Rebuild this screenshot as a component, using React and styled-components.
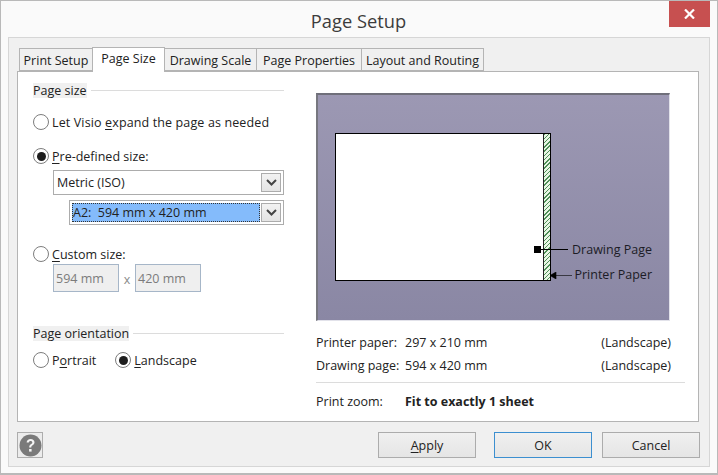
import styled, { createGlobalStyle } from "styled-components";

const GlobalStyle = createGlobalStyle`
  html, body {
    margin: 0;
    padding: 0;
    background: #fafafa;
  }
  * {
    box-sizing: border-box;
  }
`;

const Radio = ({ checked, children }) => (
  <RadioRow>
    <RadioCircle>{checked && <RadioDot />}</RadioCircle>
    <span>{children}</span>
  </RadioRow>
);

const Select = ({ active, children }) => (
  <SelectBox>
    <SelectValue $active={active}>{children}</SelectValue>
    <SelectArrow>
      <svg width="11" height="7" viewBox="0 0 11 7">
        <path d="M1 1l4.5 4.5L10 1" fill="none" stroke="#444" strokeWidth="2" />
      </svg>
    </SelectArrow>
  </SelectBox>
);

const App = () => {
  return (
    <Window>
      <GlobalStyle />
      <TitleBar>
        <Title>Page Setup</Title>
        <CloseButton>
          <svg width="11" height="10" viewBox="0 0 11 10">
            <path d="M1 0.5l9 9M10 0.5l-9 9" stroke="#fff" strokeWidth="2.2" />
          </svg>
        </CloseButton>
      </TitleBar>
      <Body>
        <Tabs>
          <Tab $width={74}>Print Setup</Tab>
          <Tab $width={73} $active>Page Size</Tab>
          <Tab $width={93}>Drawing Scale</Tab>
          <Tab $width={106}>Page Properties</Tab>
          <Tab $width={123}>Layout and Routing</Tab>
        </Tabs>
        <Panel>
          <LeftColumn>
            <GroupTitle>
              <GroupLabel>Page size</GroupLabel>
            </GroupTitle>
            <ExpandRow>
              <Radio>
                Let Visio <u>e</u>xpand the page as needed
              </Radio>
            </ExpandRow>
            <PredefinedRow>
              <Radio checked>
                <u>P</u>re-defined size:
              </Radio>
            </PredefinedRow>
            <SelectIndent $level={1}>
              <Select>Metric (ISO)</Select>
            </SelectIndent>
            <SelectIndent $level={2}>
              <Select active>A2:&nbsp; 594 mm x 420 mm</Select>
            </SelectIndent>
            <CustomRow>
              <Radio>
                <u>C</u>ustom size:
              </Radio>
            </CustomRow>
            <SizeInputs>
              <SizeInput>594 mm</SizeInput>
              <Times>x</Times>
              <SizeInput>420 mm</SizeInput>
            </SizeInputs>
            <OrientationTitle>
              <GroupLabel>Page orientation</GroupLabel>
            </OrientationTitle>
            <OrientationRow>
              <Radio>
                P<u>o</u>rtrait
              </Radio>
              <Radio checked>
                <u>L</u>andscape
              </Radio>
            </OrientationRow>
          </LeftColumn>
          <RightColumn>
            <Preview>
              <Sheet>
                <Hatch />
                <Handle />
              </Sheet>
              <CalloutLine $top={154} $left={223} $width={27} />
              <ArrowHead $top={177} $left={232}>
                <svg width="22" height="7" viewBox="0 0 22 7">
                  <path d="M0 3.500L6 0v7zM5 3.500h17" fill="#000" stroke="#000" strokeWidth="0.6" />
                </svg>
              </ArrowHead>
              <Callout $top={147} $right={17}>Drawing Page</Callout>
              <Callout $top={172} $right={17}>Printer Paper</Callout>
            </Preview>
            <InfoRow $first>
              <InfoLabel>Printer paper:</InfoLabel>
              <InfoValue>297 x 210 mm</InfoValue>
              <span>(Landscape)</span>
            </InfoRow>
            <InfoRow>
              <InfoLabel>Drawing page:</InfoLabel>
              <InfoValue>594 x 420 mm</InfoValue>
              <span>(Landscape)</span>
            </InfoRow>
            <Divider />
            <ZoomRow>
              <InfoLabel>Print zoom:</InfoLabel>
              <ZoomValue>Fit to exactly 1 sheet</ZoomValue>
            </ZoomRow>
          </RightColumn>
        </Panel>
        <Footer>
          <HelpButton>
            <svg width="23" height="23" viewBox="0 0 23 23">
              <circle cx="11.5" cy="11.5" r="11" fill="#7a7a7a" />
              <path
                d="M7.6 8.6c.2-2.3 1.8-3.5 4-3.5 2.300 0 3.900 1.300 3.900 3.200 0 1.500-.8 2.300-1.900 3-1 .7-1.300 1.100-1.300 2.200h-2.100c0-1.700.5-2.500 1.700-3.300.9-.6 1.400-1.100 1.400-1.800 0-.9-.7-1.500-1.700-1.500s-1.700.6-1.800 1.700z"
                fill="#f4f4f4"
              />
              <rect x="10.100" y="15" width="2.500" height="2.600" fill="#f4f4f4" />
            </svg>
          </HelpButton>
          <FooterButtons>
            <Button $apply>
              <u>A</u>pply
            </Button>
            <Button $primary>OK</Button>
            <Button>Cancel</Button>
          </FooterButtons>
        </Footer>
      </Body>
    </Window>
  );
};

const Window = styled.div`
  width: 718px;
  height: 475px;
  display: flex;
  flex-direction: column;
  background: #fafafa;
  border: 1px solid #b9b9b9;
  border-bottom-width: 2px;
  font-family: "Open Sans", "Noto Sans", sans-serif;
  font-size: 12.5px;
  color: #222;
  overflow: hidden;

  u {
    text-underline-offset: 2px;
  }
`;
const TitleBar = styled.div`
  height: 36px;
  flex: none;
  display: flex;
  justify-content: center;
  align-items: center;
  position: relative;
`;
const Title = styled.div`
  font-size: 18.3px;
  color: #3c3c3c;
  margin-top: 3px;
  margin-right: 1px;
`;
const CloseButton = styled.div`
  position: absolute;
  top: 0;
  right: 7px;
  width: 41px;
  height: 26px;
  background: #c75050;
  display: flex;
  align-items: center;
  justify-content: center;
`;
const Body = styled.div`
  flex: 1;
  margin: 0 7px 6px;
  background: #f0f0f0;
  border: 1px solid #d6d6d6;
  padding: 9px 11px 0 8px;
  display: flex;
  flex-direction: column;
`;
const Tabs = styled.div`
  display: flex;
  height: 24px;
  flex: none;
  padding-left: 3px;
  align-items: flex-end;
  position: relative;
  z-index: 1;
`;
const Tab = styled.div`
  width: ${(p) => p.$width}px;
  height: ${(p) => (p.$active ? "25px" : "23px")};
  padding: ${(p) => (p.$active ? "0 0 4px" : "1px 0 0")};
  margin-bottom: ${(p) => (p.$active ? "-1px" : "0")};
  border: 1px solid #b4b4b4;
  border-bottom: ${(p) => (p.$active ? "none" : "1px solid #b4b4b4")};
  margin-left: -1px;
  background: ${(p) => (p.$active ? "#fff" : "#f0f0f0")};
  display: flex;
  align-items: center;
  justify-content: center;
  white-space: nowrap;
  position: relative;
  z-index: ${(p) => (p.$active ? 2 : 1)};
`;
const Panel = styled.div`
  width: 682px;
  height: 351px;
  flex: none;
  background: #fff;
  border: 1px solid #b4b4b4;
  display: flex;
  padding: 11px 0 0 15px;
`;
const LeftColumn = styled.div`
  width: 251px;
  flex: none;
  display: flex;
  flex-direction: column;
`;
const GroupTitle = styled.div`
  display: flex;
  align-items: center;
  height: 15px;
  &::after {
    content: "";
    flex: 1;
    height: 1px;
    background: #dcdcdc;
    margin-left: 4px;
  }
`;
const GroupLabel = styled.span`
  background: #f0f0f0;
  line-height: 15px;
`;
const OrientationTitle = styled(GroupTitle)`
  margin-top: 34px;
`;
const RadioRow = styled.div`
  display: flex;
  align-items: center;
  gap: 3px;
  height: 16px;
  white-space: nowrap;
`;
const RadioCircle = styled.div`
  width: 16px;
  height: 16px;
  border: 1px solid #7d7d7d;
  border-radius: 50%;
  background: #fff;
  flex: none;
  display: flex;
  align-items: center;
  justify-content: center;
`;
const RadioDot = styled.div`
  width: 9px;
  height: 9px;
  border-radius: 50%;
  background: #1d1d1d;
`;
const ExpandRow = styled.div`
  margin-top: 16px;
  letter-spacing: 0.13px;
`;
const PredefinedRow = styled.div`
  margin-top: 18px;
`;
const CustomRow = styled.div`
  margin-top: 21px;
`;
const SelectIndent = styled.div`
  margin-left: ${(p) => (p.$level === 2 ? "36px" : "20px")};
  margin-top: ${(p) => (p.$level === 2 ? "5px" : "6px")};
`;
const SelectBox = styled.div`
  height: 25px;
  display: flex;
  align-items: stretch;
  padding: 2px;
  background: #fff;
  border: 1px solid #acacac;
`;
const SelectValue = styled.div`
  flex: 1;
  display: flex;
  align-items: center;
  white-space: nowrap;
  padding-left: 1px;
  margin-right: 1px;
  background: ${(p) => (p.$active ? "#84bbfb" : "#fff")};
  outline: ${(p) => (p.$active ? "1px dotted #333" : "none")};
  outline-offset: -1px;
`;
const SelectArrow = styled.div`
  width: 20px;
  flex: none;
  background: linear-gradient(#f2f2f2, #e4e4e4);
  border: 1px solid #acacac;
  display: flex;
  align-items: center;
  justify-content: center;
`;
const SizeInputs = styled.div`
  display: flex;
  align-items: center;
  margin: 2px 0 0 20px;
`;
const SizeInput = styled.div`
  width: 66px;
  height: 28px;
  background: #efefef;
  border: 1px solid #a6b6c8;
  color: #7c7c7c;
  display: flex;
  align-items: center;
  padding-left: 2px;
`;
const Times = styled.span`
  width: 16px;
  text-align: center;
  color: #8a8a8a;
  padding-top: 2px;
`;
const OrientationRow = styled.div`
  display: flex;
  gap: 19px;
  margin-top: 11px;
`;
const RightColumn = styled.div`
  width: 369px;
  margin-left: 32px;
  flex: none;
  display: flex;
  flex-direction: column;
  padding-top: 10px;
`;
const Preview = styled.div`
  width: 354px;
  height: 228px;
  flex: none;
  position: relative;
  background: linear-gradient(#9c98b3, #8a87a4);
  border-top: 2px solid #6f6f7a;
  border-left: 2px solid #77777f;
  border-right: 1px solid #e2e2ea;
  border-bottom: 1px solid #e2e2ea;
  padding: 38px 0 0 17px;
`;
const Sheet = styled.div`
  width: 216px;
  height: 148px;
  background: #fff;
  border: 1px solid #000;
  position: relative;
`;
const Hatch = styled.div`
  position: absolute;
  top: 0;
  right: 0;
  bottom: 0;
  width: 7px;
  border-left: 1px solid #222;
  background: repeating-linear-gradient(
    135deg,
    #4f9058 0,
    #4f9058 1px,
    #e8f6e4 1px,
    #e8f6e4 3px
  );
`;
const Handle = styled.div`
  position: absolute;
  top: 112px;
  left: 198px;
  width: 7px;
  height: 7px;
  background: #000;
`;
const CalloutLine = styled.div`
  position: absolute;
  top: ${(p) => p.$top}px;
  left: ${(p) => p.$left}px;
  width: ${(p) => p.$width}px;
  height: 1px;
  background: #000;
`;
const ArrowHead = styled.div`
  position: absolute;
  top: ${(p) => p.$top}px;
  left: ${(p) => p.$left}px;
  line-height: 0;
`;
const Callout = styled.div`
  position: absolute;
  top: ${(p) => p.$top}px;
  right: ${(p) => p.$right}px;
  line-height: 16px;
  color: #1c1c26;
`;
const InfoRow = styled.div`
  display: grid;
  grid-template-columns: 89px 1fr auto;
  align-items: center;
  height: 23px;
  margin-top: ${(p) => (p.$first ? "10px" : "0")};
  padding-right: 14px;
`;
const InfoLabel = styled.span`
  white-space: nowrap;
`;
const InfoValue = styled.span`
  white-space: nowrap;
`;
const Divider = styled.div`
  height: 1px;
  background: #dcdcdc;
  margin-top: 5px;
`;
const ZoomRow = styled.div`
  display: grid;
  grid-template-columns: 89px 1fr;
  align-items: center;
  height: 18px;
  margin-top: 9px;
`;
const ZoomValue = styled.span`
  font-weight: 700;
`;
const Footer = styled.div`
  display: flex;
  justify-content: space-between;
  align-items: center;
  padding-top: 10px;
  width: 683px;
`;
const HelpButton = styled.div`
  width: 26px;
  height: 26px;
  border: 1px solid #adadad;
  background: #ececec;
  display: flex;
  align-items: center;
  justify-content: center;
`;
const FooterButtons = styled.div`
  display: flex;
  gap: 10px;
`;
const Button = styled.div`
  width: 98px;
  height: 26px;
  margin-right: ${(p) => (p.$apply ? "8px" : "0")};
  border: 1px solid ${(p) => (p.$primary ? "#3c8fd0" : "#acacac")};
  background: linear-gradient(#f0f0f0, #e5e5e5);
  display: flex;
  align-items: center;
  justify-content: center;
`;

export default App;
